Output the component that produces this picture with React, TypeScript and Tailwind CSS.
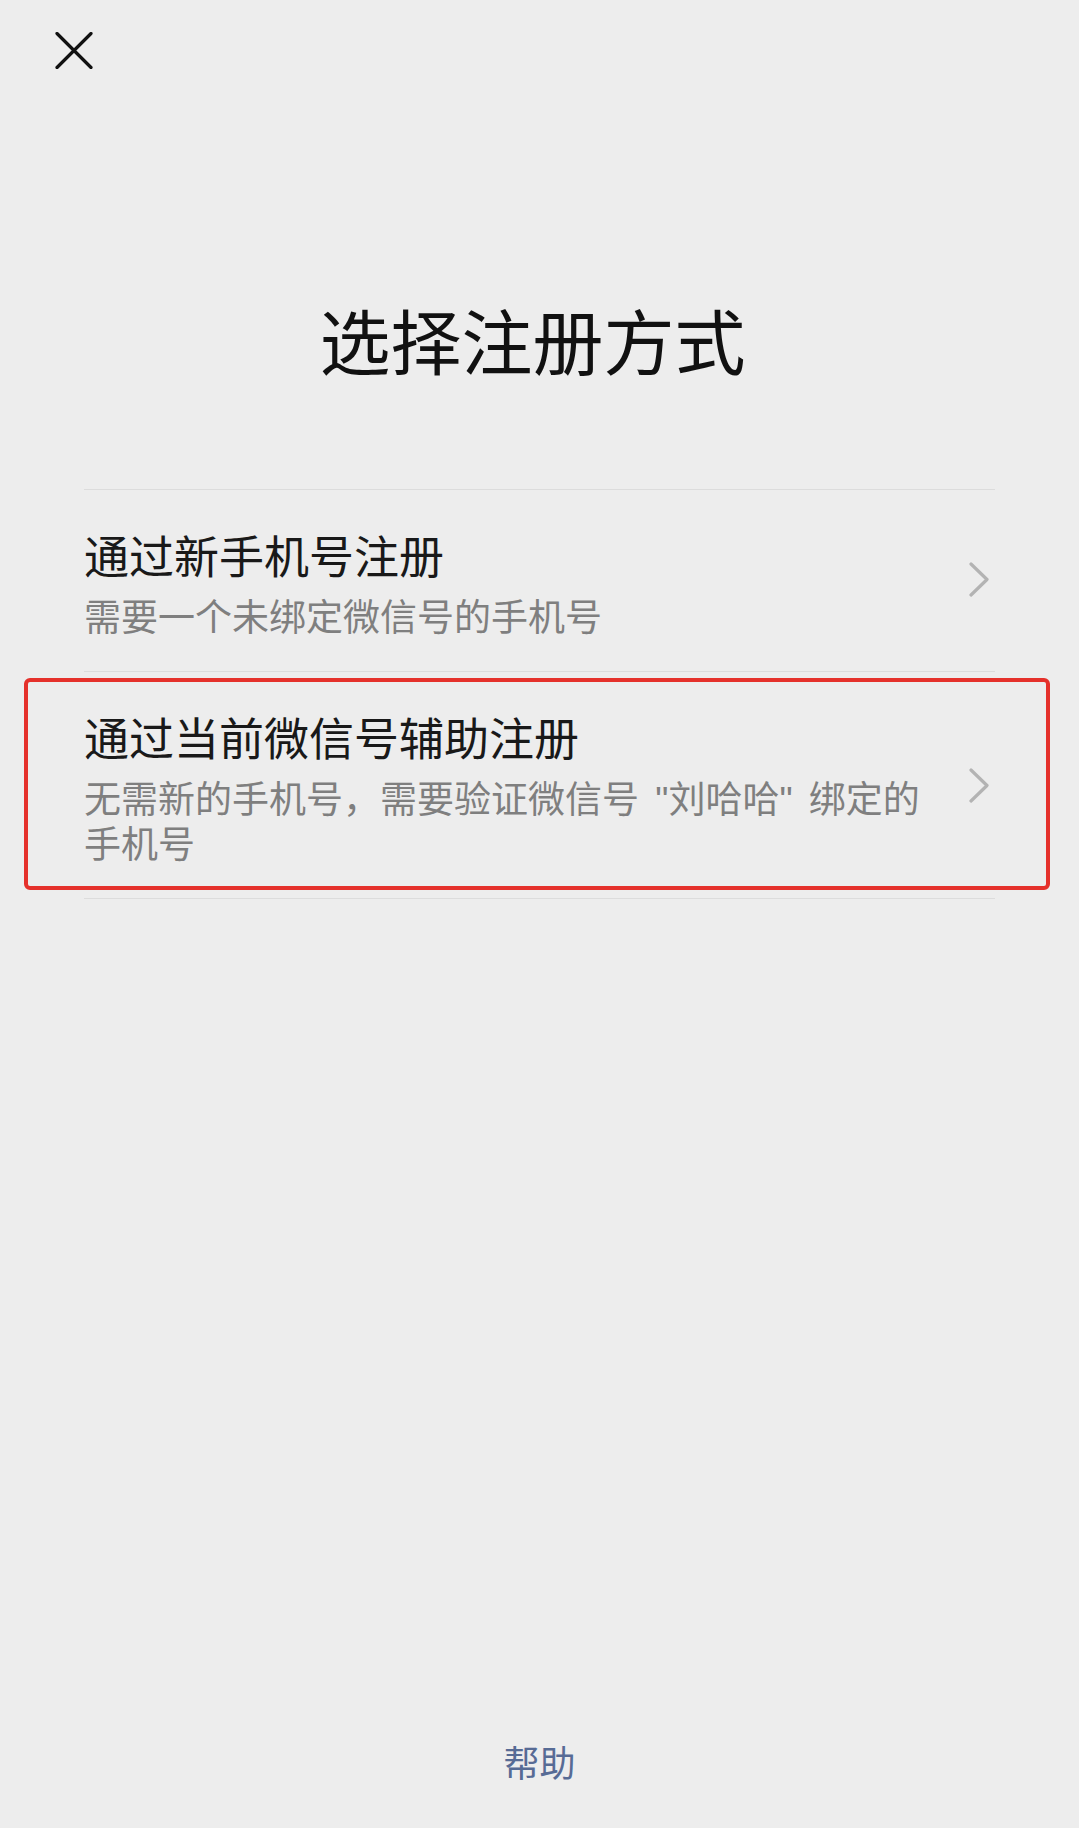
import React from "react";

function Chevron({ lift }: { lift: string }) {
  return (
    <svg width="22" height="35" viewBox="0 0 22 35" fill="none" className={"shrink-0 mr-[5px] " + lift}>
      <path d="M3 2 L19 17.5 L3 33" stroke="#b3b3b3" strokeWidth="3.2" strokeLinecap="round" strokeLinejoin="round" />
    </svg>
  );
}

export default function App() {
  return (
    <div className="w-[1079px] min-h-[1828px] bg-[#ededed] flex flex-col font-['Noto_Sans_CJK_SC','Noto_Sans',sans-serif]">
      <div className="pt-[32px] pl-[55px]">
        <svg width="38" height="37" viewBox="0 0 38 37" fill="none">
          <path d="M2 1.5 L36 35.5 M36 1.5 L2 35.5" stroke="#111111" strokeWidth="3.2" strokeLinecap="round" />
        </svg>
      </div>

      <h1 className="mt-[234px] text-center text-[71px] leading-none text-[#111111] font-normal pr-[14px]">
        选择注册方式
      </h1>

      <div className="mx-[84px] mt-[115px] flex flex-col">
        <div className="border-t border-[#dcdcdc]" />
        <div className="flex items-center justify-between pt-[42px] pb-[37px]">
          <div className="flex flex-col">
            <div className="text-[45px] leading-none text-[#191919]">通过新手机号注册</div>
            <div className="mt-[20px] text-[37px] leading-none text-[#7f7f7f]">需要一个未绑定微信号的手机号</div>
          </div>
          <Chevron lift="mb-[8px]" />
        </div>
        <div className="border-t border-[#dcdcdc]" />
        <div className="relative flex items-center justify-between pt-[42px] pb-[30px]">
          <div className="absolute left-[-60px] right-[-55px] top-[6px] bottom-[8px] border-[4px] border-[#e5312b] rounded-[6px] pointer-events-none" />
          <div className="flex flex-col">
            <div className="text-[45px] leading-none text-[#191919]">通过当前微信号辅助注册</div>
            <div className="mt-[19px] text-[37px] leading-[45px] text-[#7f7f7f] font-['Liberation_Sans','Noto_Sans_CJK_SC',sans-serif]">
              无需新的手机号，需要验证微信号 <span className="mx-[6px]">"刘哈哈"</span> 绑定的
              <br />
              手机号
            </div>
          </div>
          <Chevron lift="mb-[12px]" />
        </div>
        <div className="border-t border-[#dcdcdc]" />
      </div>

      <div className="mt-auto pb-[49px] text-center text-[36px] leading-none text-[#576b95]">帮助</div>
    </div>
  );
}
